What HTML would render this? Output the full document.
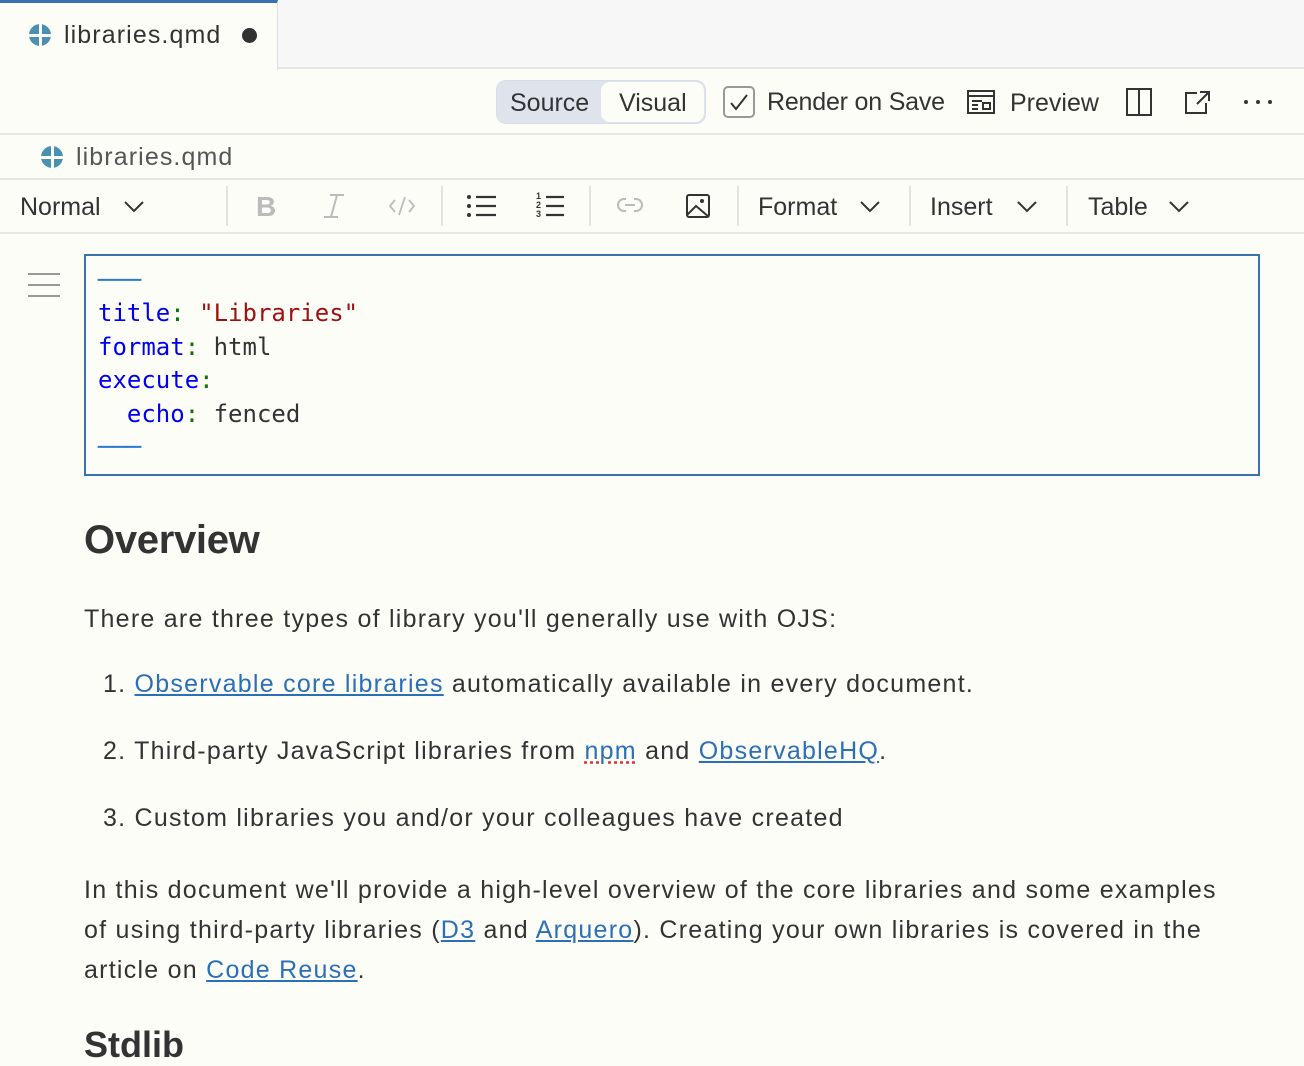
<!DOCTYPE html>
<html><head><meta charset="utf-8"><style>
*{margin:0;padding:0;box-sizing:border-box}
body{width:1304px;height:1046px;overflow:hidden;background:#fdfdf8;font-family:"Liberation Sans",sans-serif;color:#333;position:relative}
.abs{position:absolute}
.tabbar{left:0;top:0;width:1304px;height:69px;background:#f7f7f7;border-bottom:2px solid #e6e6e2}
.tab{left:0;top:0;width:278px;height:70px;background:#fdfdf8;border-top:3px solid #3a72b0;border-right:1px solid #e0e0e0}
.globe{width:22px;height:22px;border-radius:50%;background:#4a90b0;overflow:hidden}
.globe:before{content:"";position:absolute;left:10px;top:0;width:2.5px;height:22px;background:#fff}
.globe:after{content:"";position:absolute;top:10px;left:0;height:2.5px;width:22px;background:#fff}
.t{font-size:25px;color:#333;white-space:nowrap}
.hr{height:2px;background:#e6e6e2;left:0;width:1304px}
.sep{width:2px;height:40px;background:#e2e2de;top:186px}
.code{font-family:"DejaVu Sans Mono",monospace;font-size:24px;line-height:33.4px;white-space:pre;color:#333}
.k{color:#0000f0}.c{color:#107010}.s{color:#a01010}.d{color:#2a7ad0}
a{color:#2a6fb8;text-decoration:underline}
.p{font-size:25px;color:#333;white-space:nowrap;letter-spacing:1.25px}
</style></head><body>
<div class="abs tabbar"></div>
<div class="abs tab"></div>
<div class="abs globe" style="left:29px;top:24px"></div>
<div class="abs t" style="left:64px;top:21px;letter-spacing:1.1px">libraries.qmd</div>
<div class="abs" style="left:242px;top:28px;width:15px;height:15px;border-radius:50%;background:#333"></div>

<div class="abs" style="left:496px;top:80px;width:210px;height:44px;border-radius:10px;background:#dfe4ec;border:1px solid #d8dee8"></div>
<div class="abs" style="left:601px;top:82px;width:103px;height:40px;border-radius:9px;background:#fdfdf8"></div>
<div class="abs t" style="left:510px;top:89px">Source</div>
<div class="abs t" style="left:619px;top:89px">Visual</div>
<div class="abs" style="left:723px;top:86px;width:32px;height:32px;border:2px solid #999;border-radius:5px"></div>
<svg class="abs" style="left:723px;top:86px" width="32" height="32"><path d="M8 17l5 6 11-14" stroke="#333" stroke-width="2" fill="none"/></svg>
<div class="abs t" style="left:767px;top:88px;letter-spacing:-0.2px">Render on Save</div>
<svg class="abs" style="left:966px;top:89px" width="30" height="26"><rect x="2" y="2" width="26" height="22" fill="none" stroke="#333" stroke-width="2"/><path d="M2 7h26M6 12h10M6 16h6M6 20h6" stroke="#333" stroke-width="2"/><rect x="17" y="14" width="7" height="6" fill="none" stroke="#333" stroke-width="2"/></svg>
<div class="abs t" style="left:1010px;top:89px">Preview</div>
<svg class="abs" style="left:1125px;top:87px" width="28" height="30"><rect x="2" y="2" width="24" height="26" fill="none" stroke="#333" stroke-width="2"/><path d="M14 2v26" stroke="#333" stroke-width="2"/></svg>
<svg class="abs" style="left:1183px;top:89px" width="30" height="26"><path d="M14 4H3v20h20V14M17 3h9v9M26 3L14 15" stroke="#333" stroke-width="2" fill="none"/></svg>
<svg class="abs" style="left:1242px;top:98px" width="32" height="8"><circle cx="4" cy="4" r="2" fill="#333"/><circle cx="16" cy="4" r="2" fill="#333"/><circle cx="28" cy="4" r="2" fill="#333"/></svg>
<div class="abs hr" style="top:133px"></div>

<div class="abs globe" style="left:41px;top:146px"></div>
<div class="abs t" style="left:76px;top:143px;color:#555;letter-spacing:1.1px">libraries.qmd</div>
<div class="abs hr" style="top:178px"></div>

<div class="abs t" style="left:20px;top:193px">Normal</div>
<svg class="abs" style="left:123px;top:199px" width="22" height="14"><path d="M2 3l9 9 9-9" stroke="#333" stroke-width="2" fill="none"/></svg>
<div class="abs sep" style="left:226px"></div>
<div class="abs" style="left:256px;top:191px;font-size:28px;font-weight:bold;color:#bbb">B</div>
<svg class="abs" style="left:322px;top:193px" width="24" height="26"><path d="M8 2h14M2 24h14M15 2L9 24" stroke="#bbb" stroke-width="2" fill="none"/></svg>
<svg class="abs" style="left:388px;top:195px" width="28" height="22"><path d="M7 5l-5 6 5 6M21 5l5 6-5 6M17 2l-6 18" stroke="#bbb" stroke-width="1.8" fill="none"/></svg>
<div class="abs sep" style="left:441px"></div>
<svg class="abs" style="left:466px;top:193px" width="32" height="26"><g fill="#333"><circle cx="3" cy="4" r="2"/><circle cx="3" cy="13" r="2"/><circle cx="3" cy="22" r="2"/></g><path d="M10 4h20M10 13h20M10 22h20" stroke="#333" stroke-width="2.2"/></svg>
<div class="abs" style="left:536px;top:192px;font-size:9px;line-height:9px;font-weight:bold;color:#333">1<br>2<br>3</div>
<svg class="abs" style="left:546px;top:193px" width="20" height="26"><path d="M0 4h18M0 13h18M0 22h18" stroke="#333" stroke-width="2.2"/></svg>
<div class="abs sep" style="left:589px"></div>
<svg class="abs" style="left:617px;top:196px" width="26" height="18"><path d="M9 3H7a6 6 0 000 12h2M17 3h2a6 6 0 010 12h-2M8 9h10" stroke="#bbb" stroke-width="2" fill="none"/></svg>
<svg class="abs" style="left:685px;top:193px" width="26" height="26"><rect x="2" y="2" width="22" height="22" rx="2" fill="none" stroke="#333" stroke-width="2"/><path d="M2 22l9-9 13 11" stroke="#333" stroke-width="2" fill="none"/><circle cx="17" cy="8" r="2" fill="#333"/></svg>
<div class="abs sep" style="left:737px"></div>
<div class="abs t" style="left:758px;top:193px">Format</div>
<svg class="abs" style="left:859px;top:199px" width="22" height="14"><path d="M2 3l9 9 9-9" stroke="#333" stroke-width="2" fill="none"/></svg>
<div class="abs sep" style="left:909px"></div>
<div class="abs t" style="left:930px;top:193px">Insert</div>
<svg class="abs" style="left:1016px;top:199px" width="22" height="14"><path d="M2 3l9 9 9-9" stroke="#333" stroke-width="2" fill="none"/></svg>
<div class="abs sep" style="left:1066px"></div>
<div class="abs t" style="left:1088px;top:193px">Table</div>
<svg class="abs" style="left:1168px;top:199px" width="22" height="14"><path d="M2 3l9 9 9-9" stroke="#333" stroke-width="2" fill="none"/></svg>
<div class="abs hr" style="top:232px"></div>

<svg class="abs" style="left:28px;top:273px" width="33" height="24"><path d="M0 1h32M0 12h32M0 23h32" stroke="#999" stroke-width="2"/></svg>
<div class="abs" style="left:84px;top:254px;width:1176px;height:222px;border:2px solid #3a72b0"></div>
<div class="abs code" style="left:98px;top:264px"><span class="d">───</span>
<span class="k">title</span><span class="c">:</span> <span class="s">"Libraries"</span>
<span class="k">format</span><span class="c">:</span> html
<span class="k">execute</span><span class="c">:</span>
  <span class="k">echo</span><span class="c">:</span> fenced
<span class="d">───</span></div>

<div class="abs" style="left:84px;top:518px;font-size:40px;font-weight:bold;color:#333;letter-spacing:-0.3px">Overview</div>
<div class="abs p" style="left:84px;top:605px">There are three types of library you'll generally use with OJS:</div>
<div class="abs p" style="left:103px;top:670px">1. <a>Observable core libraries</a> automatically available in every document.</div>
<div class="abs p" style="left:103px;top:737px">2. Third-party JavaScript libraries from <a style="text-decoration:underline dotted #d33">npm</a> and <a>ObservableHQ</a>.</div>
<div class="abs p" style="left:103px;top:804px">3. Custom libraries you and/or your colleagues have created</div>
<div class="abs p" style="left:84px;top:870px;line-height:40px">In this document we'll provide a high-level overview of the core libraries and some examples<br>of using third-party libraries (<a>D3</a> and <a>Arquero</a>). Creating your own libraries is covered in the<br>article on <a>Code Reuse</a>.</div>
<div class="abs" style="left:84px;top:1024px;font-size:36px;font-weight:bold;color:#333">Stdlib</div>
</body></html>
